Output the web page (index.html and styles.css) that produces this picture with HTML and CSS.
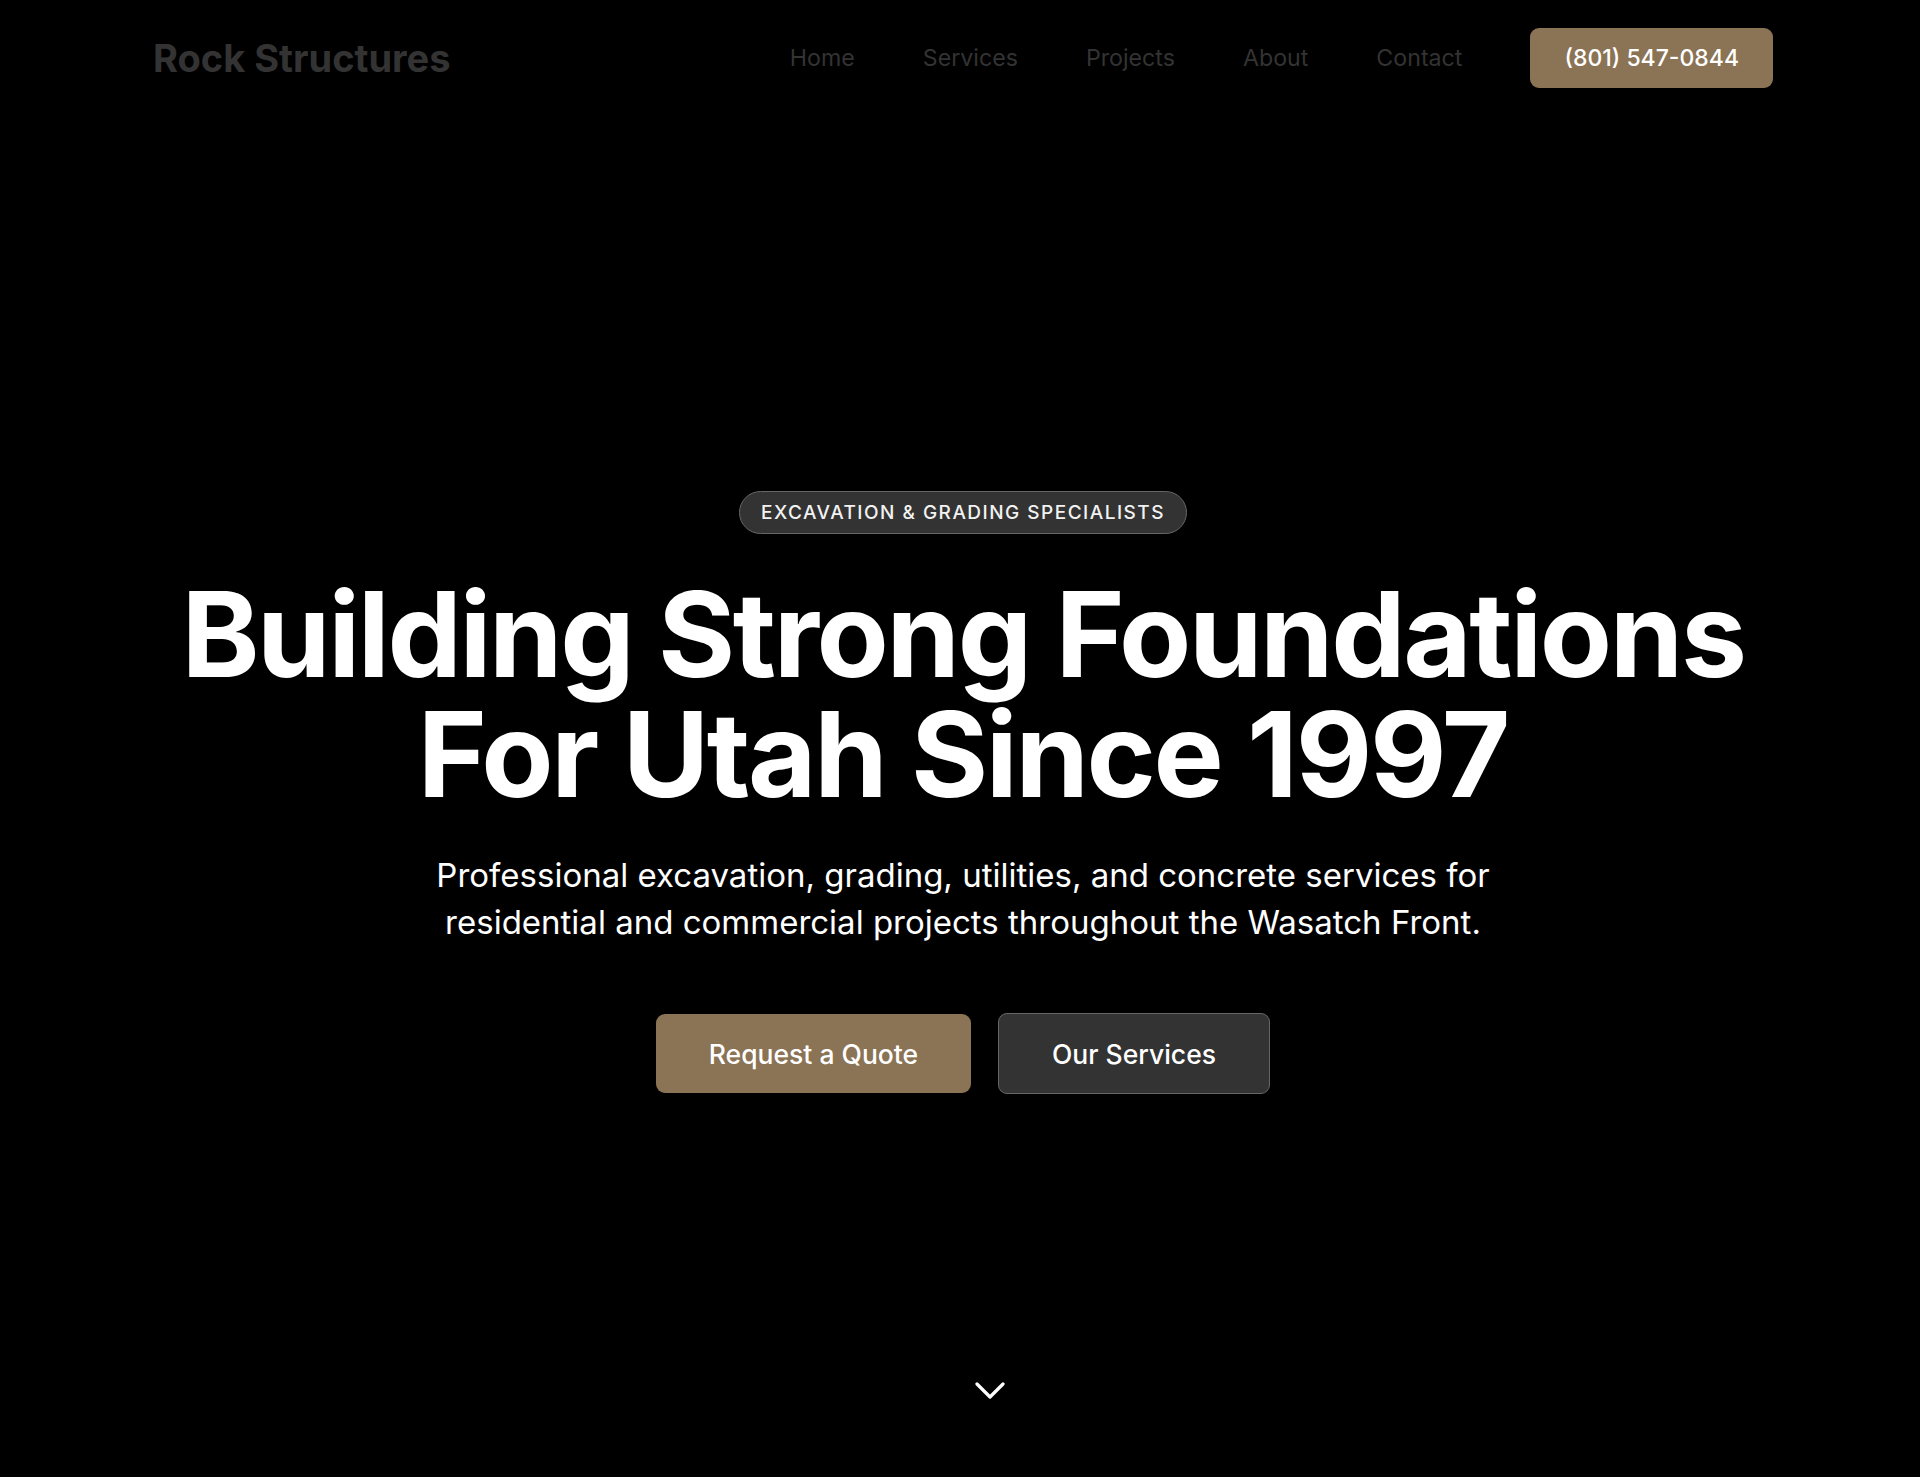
FILE: index.html
```html
<!DOCTYPE html>
<html lang="en">
<head>
<meta charset="utf-8">
<title>Rock Structures</title>
<link rel="stylesheet" href="styles.css">
</head>
<body>
<header class="nav">
  <a class="logo" href="#">Rock Structures</a>
  <nav class="links">
    <a href="#">Home</a>
    <a href="#">Services</a>
    <a href="#">Projects</a>
    <a href="#">About</a>
    <a href="#">Contact</a>
    <a class="phone" href="#">(801) 547-0844</a>
  </nav>
</header>
<main class="hero">
  <div class="badge">EXCAVATION &amp; GRADING SPECIALISTS</div>
  <h1 class="title">Building Strong Foundations<br>For Utah Since 1997</h1>
  <p class="lead">Professional excavation, grading, utilities, and concrete services for residential and commercial projects throughout the Wasatch Front.</p>
  <div class="actions">
    <a class="btn btn-primary" href="#">Request a Quote</a>
    <a class="btn btn-secondary" href="#">Our Services</a>
  </div>
  <div class="scroll">
    <svg width="30" height="18" viewBox="0 0 30 18" fill="none" stroke="#fff" stroke-width="3.2" stroke-linecap="round" stroke-linejoin="round"><path d="M2 2 L15 15 L28 2"/></svg>
  </div>
</main>
</body>
</html>
```
FILE: styles.css
```css
* { box-sizing: border-box; }
html, body { margin: 0; padding: 0; }
body {
  background: #000;
  color: #fff;
  font-family: Inter, "Noto Sans", "Liberation Sans", sans-serif;
  height: 1477px;
  overflow: hidden;
}
a { text-decoration: none; color: inherit; }

.nav {
  display: flex;
  align-items: center;
  justify-content: space-between;
  height: 116px;
  padding: 0 147px 0 153px;
}
.logo {
  font-size: 38px;
  font-weight: 700;
  letter-spacing: 0;
  color: #333;
}
.links {
  display: flex;
  align-items: center;
  gap: 68px;
  font-size: 23.2px;
  color: #333;
}
.phone {
  display: flex;
  align-items: center;
  height: 60px;
  padding: 0 34px;
  background: #8b7355;
  color: #fff;
  border-radius: 9px;
  font-weight: 500;
  font-size: 23px;
}

.hero {
  display: flex;
  flex-direction: column;
  align-items: center;
  padding-top: 375px;
  padding-left: 6px;
  text-align: center;
}
.badge {
  height: 43px;
  display: flex;
  align-items: center;
  padding: 0 21px;
  border: 1.5px solid #666;
  background: #333;
  border-radius: 999px;
  font-size: 19px;
  font-weight: 500;
  letter-spacing: 0.078em;
  color: #f2f2f2;
}
.title {
  margin: 40px 0 0;
  font-size: 118px;
  line-height: 120px;
  font-weight: 700;
  letter-spacing: -0.02em;
}
.lead {
  margin: 38px 0 0;
  max-width: 1090px;
  font-size: 33px;
  line-height: 46.5px;
  color: #fff;
}
.actions {
  display: flex;
  gap: 27px;
  margin-top: 68px;
  align-items: center;
}
.btn {
  display: flex;
  align-items: center;
  justify-content: center;
  height: 79px;
  font-size: 26.5px;
  font-weight: 500;
  border-radius: 9px;
}
.btn-primary {
  width: 315px;
  background: #8b7355;
  color: #fff;
}
.btn-secondary {
  width: 272px;
  height: 81px;
  background: #333;
  border: 1.5px solid #666;
  color: #fff;
}
.scroll {
  margin-top: 288px;
  margin-left: 54px;
  line-height: 0;
}
```
